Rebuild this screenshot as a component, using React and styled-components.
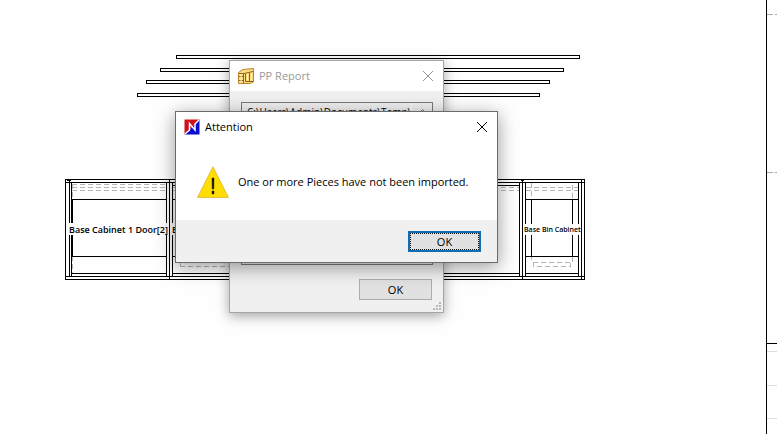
import React from 'react'
import styled, { createGlobalStyle } from 'styled-components'

const GlobalStyle = createGlobalStyle`
    * {
        box-sizing: border-box;
    }

    body {
        margin: 0;
        background: #fefefe;
        font-family: "Open Sans", "Noto Sans", sans-serif;
        font-size: 11px;
    }`

const Desktop = styled.main`
    position: relative;
    min-height: 100vh;
    overflow: hidden;`

const Drawing = styled.svg`
    display: block;
    width: 100%;
    height: 100vh;
    shape-rendering: crispEdges;`

const DrawingLabel = styled.text`
    font-family: "Open Sans", "Noto Sans", sans-serif;
    font-size: ${props => props.$size}px;
    font-weight: 600;
    fill: #000;`

const Window = styled.section`
    position: absolute;
    left: ${props => props.$left}px;
    top: ${props => props.$top}px;
    width: ${props => props.$width}px;
    display: flex;
    flex-direction: column;
    background: ${props => props.$active ? '#fff' : '#f0f0f0'};
    border: 1px solid ${props => props.$active ? '#6b6b6b' : '#a5a5a5'};
    box-shadow: ${props => props.$active
        ? '0 4px 18px rgba(0, 0, 0, 0.4)'
        : '0 3px 12px rgba(0, 0, 0, 0.36)'};`

const TitleBar = styled.header`
    display: flex;
    align-items: center;
    gap: 5px;
    height: 30px;
    padding: 0 8px;
    background: #fff;
    color: ${props => props.$active ? '#000' : '#999'};`

const Title = styled.h1`
    flex: 1;
    margin: 0;
    font-size: 11px;
    font-weight: 400;
    line-height: 16px;`

const CloseButton = styled.button`
    display: flex;
    padding: 1px;
    border: none;
    background: none;
    color: inherit;`

const ReportBody = styled.div`
    display: flex;
    flex-direction: column;
    padding: 11px 10px 12px 11px;`

const PathBox = styled.div`
    display: flex;
    height: 163px;
    border: 1px solid #7a7a7a;`

const PathText = styled.textarea`
    flex: 1;
    min-width: 0;
    padding: 0 0 0 5px;
    border: none;
    outline: none;
    resize: none;
    overflow: hidden;
    white-space: pre;
    background: #f0f0f0;
    color: #000;
    font: 10px/18px "Open Sans", "Noto Sans", sans-serif;`

const ScrollTrack = styled.div`
    display: flex;
    justify-content: center;
    width: 21px;
    padding-top: 6px;
    border-left: 1px solid #fff;`

const PushButton = styled.button`
    align-self: flex-end;
    width: 73px;
    height: 21px;
    padding: 0;
    border: 1px solid #adadad;
    background: #e1e1e1;
    color: #000;
    font: 11px/16px "Open Sans", "Noto Sans", sans-serif;`

const ReportButton = styled(PushButton)`
    margin: 14px 1px 0 0;`

const DefaultButton = styled(PushButton)`
    border: 2px solid #0e6db5;
    outline: 1px dotted #111;
    outline-offset: -3px;`

const Grip = styled.svg`
    position: absolute;
    right: 2px;
    bottom: 2px;`

const Message = styled.div`
    display: flex;
    align-items: center;
    gap: 9px;
    height: 78px;
    padding: 2px 21px 0;

    svg {
        flex-shrink: 0;
    }`

const MessageText = styled.p`
    margin: 0;
    color: #000;
    line-height: 16px;
    white-space: nowrap;`

const Footer = styled.footer`
    display: flex;
    flex-direction: column;
    padding: 11px 16px 10px;
    background: #f0f0f0;`

const bars = [
    { x: 176, y: 55, width: 403 },
    { x: 160, y: 68, width: 403 },
    { x: 146, y: 80, width: 403 },
    { x: 137, y: 93, width: 402 },
]

const CloseIcon = () => (
    <svg width="12" height="12" viewBox="0 0 12 12" stroke="currentColor">
        <path d="M1 1 11 11M11 1 1 11" />
    </svg>
)

const CabinetIcon = () => (
    <svg width="16" height="16" viewBox="0 0 16 16">
        <path d="M0.5 4.5 5 1.5 15.5 0.5V14L12 15.5H0.5Z" fill="#fbdc82" stroke="#b8842f" />
        <path d="M1 5.5H6L15 3.5M5.5 5.5V15M1 8.5H5M1 12.5H5M7.5 6V13.5H15M11.5 5V13" fill="none" stroke="#94641c" />
        <path d="M3 6V15M9.5 6V12M13.5 5V12" stroke="#fff3bf" />
    </svg>
)

const LogoIcon = () => (
    <svg width="16" height="16" viewBox="0 0 16 16">
        <path d="M0.5 0.5H15.5L0.5 15.5Z" fill="#cf1019" />
        <path d="M15.5 0.5V15.5H0.5Z" fill="#0b0bd0" />
        <path d="M1 15 5.5 11V4.5L11 11V5L15 1" fill="none" stroke="#fff" strokeWidth="1.5" />
    </svg>
)

const WarningIcon = () => (
    <svg width="32" height="32" viewBox="0 0 32 32">
        <path d="M16 0.8 31.4 31.4H0.6Z" fill="#ffde00" stroke="#e7bd35" strokeLinejoin="round" />
        <path d="M15 12H17L16.8 23H15.2ZM15 25H17V28H15Z" fill="#111" stroke="#111" strokeWidth="0.4" />
    </svg>
)

const CabinetDrawing = () => (
    <Drawing>
        <g fill="#fff" stroke="#000">
            {bars.map(bar => (
                <rect key={bar.y} x={bar.x + 0.5} y={bar.y + 0.5} width={bar.width} height="3" />
            ))}
        </g>

        {/* hidden edges */}
        <g fill="none" stroke="#b5b5b5" strokeDasharray="5 3">
            <path d="M72 184.5H166M72 187.5H166M72 190.5H166M72.5 184V273" />
            <path d="M173 187.5H519M173 190.5H519M526 187.5H578M526 190.5H578" />
            <path d="M180 262.5H300M180 266.5H300M180.5 262V266" />
            <path d="M531.5 183V262H572.5V183M533.5 262V266.5H570.5V262" />
        </g>

        {/* carcass */}
        <g fill="none" stroke="#000">
            <path d="M65.5 179.5H584.5V279.5H65.5ZM65 182.5H584M65 276.5H584" />
            <path d="M69.5 179V276M71.5 182V276M166.5 182V276M169.5 179V279M172.5 182V276" />
            <path d="M72 199.5H166M72 256.5H166M72 273.5H166M72.5 199V256" />
            <path d="M173 199.5H230M173 256.5H230M173 273.5H519M173 185.5H519" />
            <path d="M519.5 182V276M522.5 179V279M525.5 182V276M578.5 182V276M581.5 179V279" />
            <path d="M526 199.5H578M526 256.5H578M526 273.5H578M531.5 199V256M572.5 199V256" />
            <path d="M67 180.5H71M521 180.5H524" />
        </g>

        <g fill="#fefefe">
            <rect x="68" y="223" width="101" height="12" />
            <rect x="172" y="223" width="50" height="12" />
            <rect x="524" y="224" width="55" height="11" />
        </g>
        <DrawingLabel $size={9} x="69" y="233">Base Cabinet 1 Door[2]</DrawingLabel>
        <DrawingLabel $size={9} x="172" y="233">B</DrawingLabel>
        <DrawingLabel $size={7} x="524" y="232">Base Bin Cabinet</DrawingLabel>

        {/* sheet edge */}
        <path d="M766.5 0V2000M766 343.5H4000" stroke="#000" />
        <path d="M767 14.5H4000M767 172.5H4000" stroke="#aaa" strokeDasharray="6 2" />
        <path d="M767 351.5H4000M767 385.5H4000M767 418.5H4000" stroke="#ddd" />
    </Drawing>
)

const App = () => {
    return (
        <>
            <GlobalStyle />
            <Desktop>
                <CabinetDrawing />

                <Window $left={229} $top={60} $width={215} aria-label="PP Report">
                    <TitleBar>
                        <CabinetIcon />
                        <Title>PP Report</Title>
                        <CloseButton aria-label="Close report"><CloseIcon /></CloseButton>
                    </TitleBar>
                    <ReportBody>
                        <PathBox>
                            <PathText aria-label="Report path" readOnly defaultValue="C:\Users\Admin\Documents\Temp\" />
                            <ScrollTrack>
                                <svg width="7" height="4" viewBox="0 0 7 4" fill="none" stroke="#777">
                                    <path d="M0.5 3.5 3.5 0.5 6.5 3.5" />
                                </svg>
                            </ScrollTrack>
                        </PathBox>
                        <ReportButton>OK</ReportButton>
                    </ReportBody>
                    <Grip width="8" height="8" fill="#b8b8b8">
                        <path d="M6 0H8V2H6ZM3 3H5V5H3ZM6 3H8V5H6ZM0 6H2V8H0ZM3 6H5V8H3ZM6 6H8V8H6Z" />
                    </Grip>
                </Window>

                <Window $active $left={175} $top={111} $width={323} role="dialog" aria-label="Attention">
                    <TitleBar $active>
                        <LogoIcon />
                        <Title>Attention</Title>
                        <CloseButton aria-label="Close message"><CloseIcon /></CloseButton>
                    </TitleBar>
                    <Message>
                        <WarningIcon />
                        <MessageText>One or more Pieces have not been imported.</MessageText>
                    </Message>
                    <Footer>
                        <DefaultButton>OK</DefaultButton>
                    </Footer>
                </Window>
            </Desktop>
        </>
    )
}

export default App
